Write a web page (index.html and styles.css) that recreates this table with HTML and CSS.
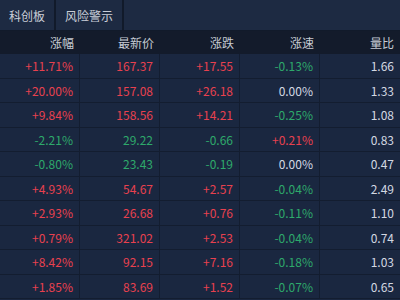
FILE: index.html
```html
<!DOCTYPE html>
<html lang="zh-CN">
<head>
  <meta charset="UTF-8">
  <title>行情列表</title>
  <link rel="stylesheet" href="styles.css">
</head>
<body>
  <div class="panel">
    <div class="tabs">
      <div class="tab">科创板</div>
      <div class="tab">风险警示</div>
      <div class="tab-rest"></div>
    </div>
    <div class="grid">
      <div class="row head">
        <div>涨幅</div><div>最新价</div><div>涨跌</div><div>涨速</div><div>量比</div>
      </div>
      <div class="row"><div class="up">+11.71%</div><div class="up">167.37</div><div class="up">+17.55</div><div class="down">-0.13%</div><div>1.66</div></div>
      <div class="row"><div class="up">+20.00%</div><div class="up">157.08</div><div class="up">+26.18</div><div>0.00%</div><div>1.33</div></div>
      <div class="row"><div class="up">+9.84%</div><div class="up">158.56</div><div class="up">+14.21</div><div class="down">-0.25%</div><div>1.08</div></div>
      <div class="row"><div class="down">-2.21%</div><div class="down">29.22</div><div class="down">-0.66</div><div class="up">+0.21%</div><div>0.83</div></div>
      <div class="row"><div class="down">-0.80%</div><div class="down">23.43</div><div class="down">-0.19</div><div>0.00%</div><div>0.47</div></div>
      <div class="row"><div class="up">+4.93%</div><div class="up">54.67</div><div class="up">+2.57</div><div class="down">-0.04%</div><div>2.49</div></div>
      <div class="row"><div class="up">+2.93%</div><div class="up">26.68</div><div class="up">+0.76</div><div class="down">-0.11%</div><div>1.10</div></div>
      <div class="row"><div class="up">+0.79%</div><div class="up">321.02</div><div class="up">+2.53</div><div class="down">-0.04%</div><div>0.74</div></div>
      <div class="row"><div class="up">+8.42%</div><div class="up">92.15</div><div class="up">+7.16</div><div class="down">-0.18%</div><div>1.03</div></div>
      <div class="row"><div class="up">+1.85%</div><div class="up">83.69</div><div class="up">+1.52</div><div class="down">-0.07%</div><div>0.65</div></div>
    </div>
  </div>
</body>
</html>
```

FILE: styles.css
```css
body {
  margin: 0;
  background-color: #1a2740;
  font-family: "Noto Sans CJK SC", sans-serif;
  overflow: hidden;
}
.panel {
  width: 400px;
  height: 300px;
  background-color: #1a2740;
}
.tabs {
  display: flex;
  height: 30px;
  background-color: #111a2a;
  gap: 2px;
  border-bottom: 1px solid #111a2a;
}
.tab {
  display: flex;
  align-items: center;
  padding: 0 9px;
  background-color: #1d2a42;
  color: #c9ced8;
  font-size: 12px;
}
.tab-rest {
  flex: 1;
  background-color: #1d2a42;
}
.row {
  display: grid;
  grid-template-columns: repeat(5, 80px);
  height: 24.5px;
  box-sizing: border-box;
  border-bottom: 1px solid #131d30;
}
.row > div {
  display: flex;
  align-items: center;
  justify-content: flex-end;
  padding-right: 6px;
  font-size: 12px;
  color: #d3d8e2;
  border-right: 1px solid #131d30;
}
.row > div:last-child {
  border-right: none;
}
.row.head {
  height: 23px;
  background-color: #131b2b;
  border-bottom: none;
}
.row.head > div {
  color: #c6cbd4;
  border-right: none;
}
.up {
  color: #e8414f !important;
}
.down {
  color: #2ea96b !important;
}
```
